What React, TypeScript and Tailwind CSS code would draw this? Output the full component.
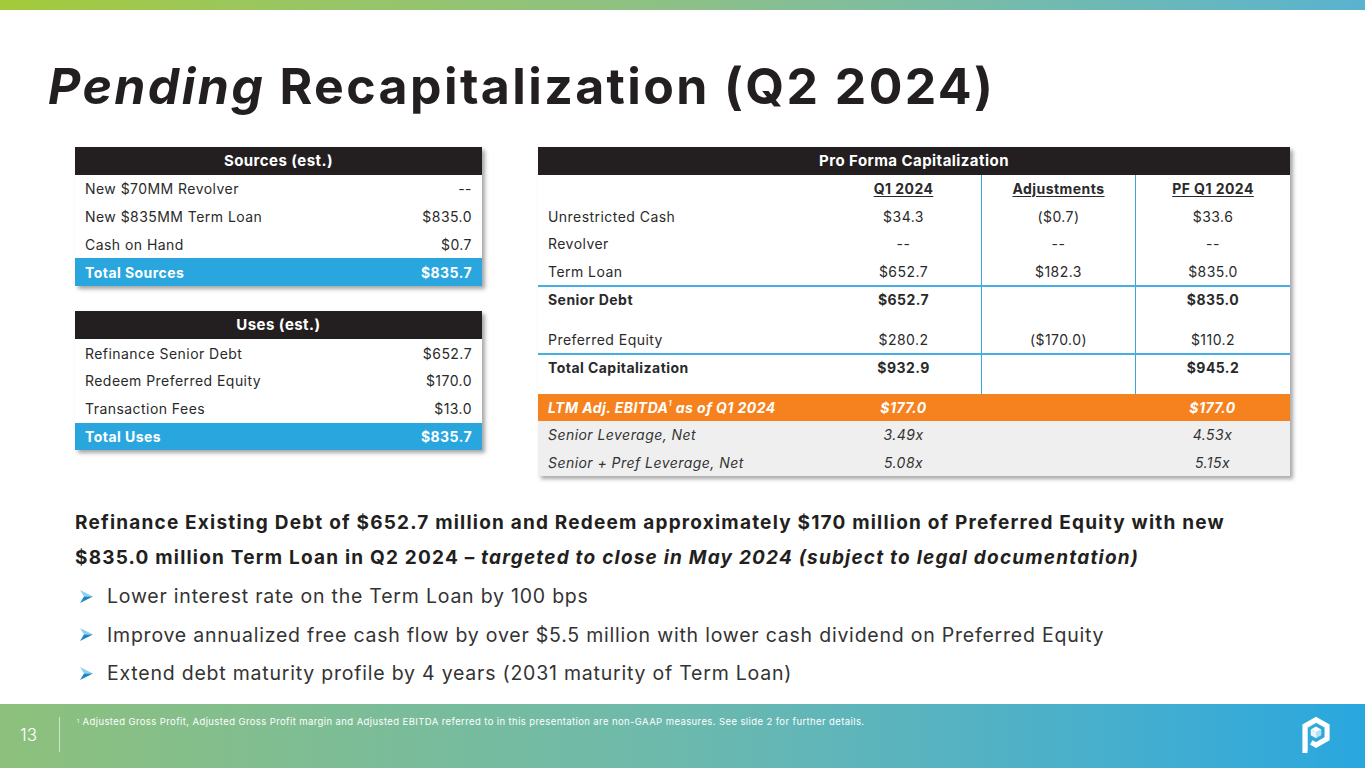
import React from 'react'

const font = { fontFamily: 'Inter, "Noto Sans", sans-serif' }

function Arrow() {
  return (
    <svg width="13" height="13" viewBox="0 0 13 13" className="shrink-0">
      <polygon points="0,0 13,6.5 4,6.5" fill="#8fd0f2" />
      <polygon points="0,13 13,6.5 4,6.5" fill="#1b86c6" />
    </svg>
  )
}

function Logo() {
  return (
    <svg width="32" height="38" viewBox="0 0 30 36">
      <path d="M4.5 35 V9.5 L15 3.5 L25.5 9.5 V21.5 L15 27.5 L10.5 25" fill="none" stroke="#fff" strokeWidth="4.8" strokeLinejoin="miter" />
      <path d="M6.9 33 V11 L15 6.3" fill="none" stroke="#d8eef9" strokeWidth="0.8" />
      <polygon points="15,10 20,12.7 15,15.4 10,12.7" fill="#fff" />
      <polygon points="10,12.7 15,15.4 15,21 10,18.3" fill="#fff" opacity="0.9" />
      <polygon points="15,15.4 20,12.7 20,18.3 15,21" fill="#fff" opacity="0.65" />
    </svg>
  )
}

function SimpleTable({ title, rows, total }: { title: string; rows: [string, string][]; total: [string, string] }) {
  return (
    <div className="w-[407px] shadow-[3px_3px_4px_rgba(0,0,0,0.35)] bg-white text-[14px] tracking-[0.45px]">
      <div className="h-[28px] bg-[#231f20] text-white font-bold flex items-center justify-center text-[15px]">{title}</div>
      {rows.map(([l, v]) => (
        <div key={l} className="h-[27.8px] flex items-center justify-between px-[10px] text-[#2a2a2a]">
          <span>{l}</span>
          <span>{v}</span>
        </div>
      ))}
      <div className="h-[27.8px] flex items-center justify-between px-[10px] bg-[#29a6de] text-white font-bold">
        <span>{total[0]}</span>
        <span>{total[1]}</span>
      </div>
    </div>
  )
}

type PfRow = { label: string; q1: string; adj: string; pf: string; kind?: 'bold' | 'spacer' | 'header' }

const pfRows: PfRow[] = [
  { label: '', q1: 'Q1 2024', adj: 'Adjustments', pf: 'PF Q1 2024', kind: 'header' },
  { label: 'Unrestricted Cash', q1: '$34.3', adj: '($0.7)', pf: '$33.6' },
  { label: 'Revolver', q1: '--', adj: '--', pf: '--' },
  { label: 'Term Loan', q1: '$652.7', adj: '$182.3', pf: '$835.0' },
  { label: 'Senior Debt', q1: '$652.7', adj: '', pf: '$835.0', kind: 'bold' },
  { label: '', q1: '', adj: '', pf: '', kind: 'spacer' },
  { label: 'Preferred Equity', q1: '$280.2', adj: '($170.0)', pf: '$110.2' },
  { label: 'Total Capitalization', q1: '$932.9', adj: '', pf: '$945.2', kind: 'bold' },
  { label: '', q1: '', adj: '', pf: '', kind: 'spacer' },
]

function ProForma() {
  return (
    <div className="w-[752px] shadow-[3px_3px_4px_rgba(0,0,0,0.35)] bg-white text-[14px] tracking-[0.45px] text-[#2a2a2a]">
      <div className="h-[28px] bg-[#231f20] text-white font-bold flex items-center justify-center text-[15px]">Pro Forma Capitalization</div>
      {pfRows.map((r, i) => {
        const h = r.kind === 'spacer' ? 'h-[13px]' : 'h-[27.5px]'
        const top = i === 4 || i === 7 ? 'border-t-2 border-[#45aee6]' : ''
        const weight = r.kind === 'bold' ? 'font-bold' : ''
        const hd = r.kind === 'header' ? 'font-bold underline underline-offset-2' : ''
        return (
          <div key={i} className={`grid grid-cols-[288px_155px_154px_155px] ${h} ${top} ${weight}`}>
            <div className="flex items-center pl-[10px]">{r.label}</div>
            <div className={`flex items-center justify-center ${hd}`}>{r.q1}</div>
            <div className={`flex items-center justify-center border-l border-[#3aa6e0] ${hd}`}>{r.adj}</div>
            <div className={`flex items-center justify-center border-l border-[#3aa6e0] ${hd}`}>{r.pf}</div>
          </div>
        )
      })}
      <div className="grid grid-cols-[288px_155px_154px_155px] h-[27.5px] bg-[#f5821f] text-white font-bold italic">
        <div className="flex items-center pl-[10px]">
          LTM Adj. EBITDA<sup className="text-[7px]">1</sup>&nbsp;as of Q1 2024
        </div>
        <div className="flex items-center justify-center">$177.0</div>
        <div />
        <div className="flex items-center justify-center">$177.0</div>
      </div>
      {[
        ['Senior Leverage, Net', '3.49x', '4.53x'],
        ['Senior + Pref Leverage, Net', '5.08x', '5.15x'],
      ].map(([l, a, b]) => (
        <div key={l} className="grid grid-cols-[288px_155px_154px_155px] h-[27.5px] bg-[#efefef] italic text-[#333]">
          <div className="flex items-center pl-[10px]">{l}</div>
          <div className="flex items-center justify-center">{a}</div>
          <div />
          <div className="flex items-center justify-center">{b}</div>
        </div>
      ))}
    </div>
  )
}

export default function App() {
  const bullets = [
    'Lower interest rate on the Term Loan by 100 bps',
    'Improve annualized free cash flow by over $5.5 million with lower cash dividend on Preferred Equity',
    'Extend debt maturity profile by 4 years (2031 maturity of Term Loan)',
  ]
  return (
    <div className="w-[1365px] h-[768px] bg-white flex flex-col overflow-hidden" style={font}>
      <div className="h-[10px] bg-gradient-to-r from-[#a3ca38] via-[#8dc087] to-[#59b3cf]" />
      <h1 className="mt-[51px] pl-[48px] h-[50px] leading-[50px] text-[50px] font-bold text-[#231f20] whitespace-nowrap tracking-[2.4px]">
        <span className="italic">Pending</span> Recapitalization (Q2 2024)
      </h1>
      <div className="mt-[36px] flex pl-[75px] gap-[56px] items-start">
        <div className="flex flex-col gap-[25px]">
          <SimpleTable
            title="Sources (est.)"
            rows={[
              ['New $70MM Revolver', '--'],
              ['New $835MM Term Loan', '$835.0'],
              ['Cash on Hand', '$0.7'],
            ]}
            total={['Total Sources', '$835.7']}
          />
          <SimpleTable
            title="Uses (est.)"
            rows={[
              ['Refinance Senior Debt', '$652.7'],
              ['Redeem Preferred Equity', '$170.0'],
              ['Transaction Fees', '$13.0'],
            ]}
            total={['Total Uses', '$835.7']}
          />
        </div>
        <ProForma />
      </div>
      <div className="mt-[29px] pl-[75px] text-[#231f20] text-[19px] font-bold leading-[35px] whitespace-nowrap tracking-[1.2px]">
        <div>Refinance Existing Debt of $652.7 million and Redeem approximately $170 million of Preferred Equity with new</div>
        <div>
          $835.0 million Term Loan in Q2 2024 – <span className="italic">targeted to close in May 2024 (subject to legal documentation)</span>
        </div>
      </div>
      <div className="pl-[80px] mt-[2px] flex flex-col text-[19.5px] text-[#333] leading-[38.5px] whitespace-nowrap tracking-[0.78px]">
        {bullets.map((b) => (
          <div key={b} className="flex items-center gap-[14px]">
            <Arrow />
            <span>{b}</span>
          </div>
        ))}
      </div>
      <div className="mt-auto h-[64px] bg-gradient-to-r from-[#8dc07b] via-[#6cb9ad] to-[#28a7df] flex items-start text-white">
        <div className="w-[59px] h-full flex items-center justify-center text-[17px] font-light pr-[2px]">13</div>
        <div className="w-px h-[35px] mt-[13px] bg-white/60" />
        <div className="ml-[17px] mt-[12px] text-[9.5px] leading-[12px] tracking-[0.4px]">
          <sup className="text-[5px]">1</sup> Adjusted Gross Profit, Adjusted Gross Profit margin and Adjusted EBITDA referred to in this presentation are non-GAAP measures. See slide 2 for further details.
        </div>
        <div className="ml-auto mr-[33px] mt-[12px]">
          <Logo />
        </div>
      </div>
    </div>
  )
}
